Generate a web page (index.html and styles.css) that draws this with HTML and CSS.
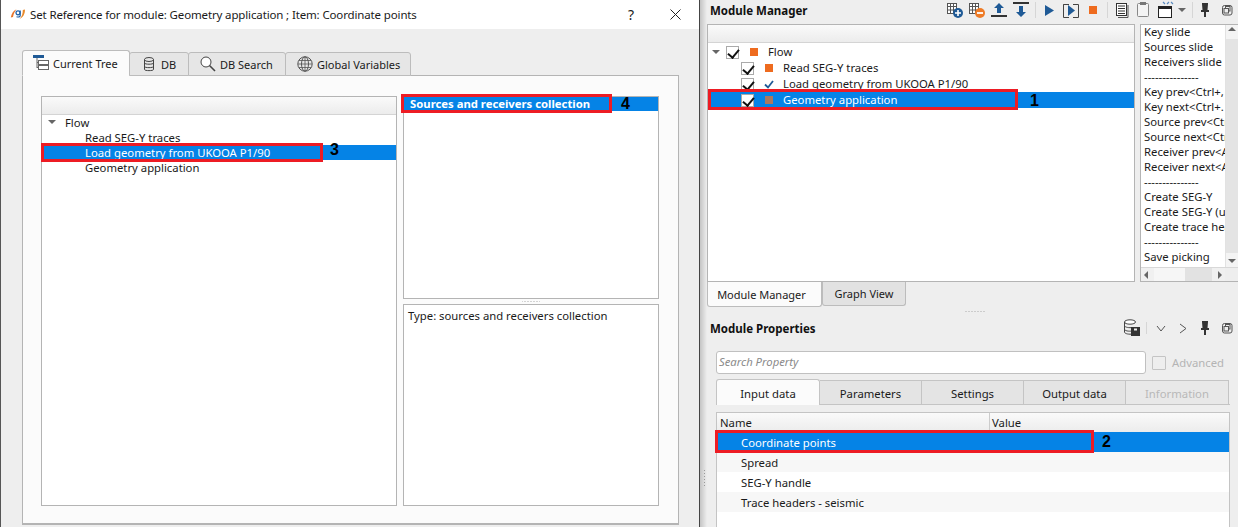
FILE: index.html
```html
<!DOCTYPE html>
<html lang="en">
<head>
<meta charset="utf-8">
<title>Set Reference</title>
<link rel="stylesheet" href="styles.css">
</head>
<body>
<div class="dialog">
  <div class="titlebar">
    <svg class="app-icon" width="16" height="12" viewBox="0 0 16 12"><path d="M.8 9.500C1.500 5.500 3.500 2.500 6.500 1.300C4.800 3.500 3.500 6 3 9Z" fill="#e8742a"/><path d="M15 1.500C15 6 13 9.500 9.500 11C12 8.500 12.800 5.500 12.800 2Z" fill="#e8892a"/><circle cx="8" cy="4.800" r="2" fill="none" stroke="#1d5fa8" stroke-width="1.200"/><path d="M10.200 2.500V7.500C10.200 9 8.500 9.300 6.500 8.700" fill="none" stroke="#1d5fa8" stroke-width="1.200"/></svg>
    <span class="title-text">Set Reference for module: Geometry application ; Item: Coordinate points</span>
    <span class="help">?</span>
    <svg class="close" width="11" height="11" viewBox="0 0 11 11"><path d="M.5.5L10.5 10.5M10.5.5L.5 10.5" stroke="#222" stroke-width="1" fill="none"/></svg>
  </div>
  <div class="dialog-body">
    <div class="tabbar">
      <div class="tab tab-active tab-tree">
        <svg width="16" height="16" viewBox="0 0 16 16"><rect x="0" y="0" width="11" height="3" fill="#1f5a96"/><path d="M4 3V13M4 7.500H6M4 12.500H6" stroke="#666" fill="none"/><rect x="5.500" y="5.500" width="10" height="4" fill="#fff" stroke="#666"/><rect x="5.500" y="10.500" width="10" height="4" fill="#fff" stroke="#666"/></svg>
        Current Tree
      </div>
      <div class="tab tab-db">
        <svg width="12" height="15" viewBox="0 0 12 15"><ellipse cx="6" cy="2.500" rx="4.500" ry="2" fill="none" stroke="#444"/><path d="M1.500 2.500V12.500C1.500 14 10.500 14 10.500 12.500V2.500M1.500 6C1.500 7.600 10.500 7.600 10.500 6M1.500 9.500C1.500 11 10.500 11 10.500 9.500" fill="none" stroke="#444"/></svg>
        DB
      </div>
      <div class="tab tab-search">
        <svg width="16" height="16" viewBox="0 0 16 16"><circle cx="6" cy="6" r="5" fill="#fff" stroke="#444"/><path d="M9.500 9.500L15 15" stroke="#444" stroke-width="1.600"/></svg>
        DB Search
      </div>
      <div class="tab tab-global">
        <svg width="16" height="16" viewBox="0 0 16 16"><circle cx="8" cy="8" r="7.200" fill="none" stroke="#555"/><ellipse cx="8" cy="8" rx="3.500" ry="7.200" fill="none" stroke="#555"/><path d="M8 1V15M1 8H15M2 4.500H14M2 11.500H14" stroke="#555" stroke-width=".8" fill="none"/></svg>
        Global Variables
      </div>
    </div>
    <div class="tabpane">
      <div class="box left-tree">
        <div class="header-strip"></div>
        <div class="row row-flow"><span class="tri"></span>Flow</div>
        <div class="row row-child">Read SEG-Y traces</div>
        <div class="row row-child row-sel">Load geometry from UKOOA P1/90</div>
        <div class="row row-child">Geometry application</div>
      </div>
      <div class="right-col">
        <div class="box collection">
          <div class="row-coll">Sources and receivers collection</div>
        </div>
        <div class="grip-h"></div>
        <div class="box type-box">Type: sources and receivers collection</div>
      </div>
    </div>
    <div class="mark mark-3"></div><div class="num num-3">3</div>
    <div class="mark mark-4"></div><div class="num num-4">4</div>
  </div>
</div>

<div class="dock">
  <div class="dock-title">
    <span class="dock-name">Module Manager</span>
    <div class="toolbar">
      <svg class="ti" viewBox="0 0 22 20"><g fill="none" stroke="#555"><rect x="3.500" y="3.500" width="9" height="10" fill="#fff"/><path d="M6.500 3.500V13.500M9.500 3.500V13.500M3.500 6.500H12.500M3.500 10H12.500"/></g><circle cx="14" cy="13" r="5" fill="#1f5a96"/><path d="M11 13H17M14 10V16" stroke="#fff" stroke-width="1.600"/></svg>
      <svg class="ti" viewBox="0 0 22 20"><g fill="none" stroke="#555"><rect x="3.500" y="3.500" width="9" height="10" fill="#fff"/><path d="M6.500 3.500V13.500M9.500 3.500V13.500M3.500 6.500H12.500M3.500 10H12.500"/></g><circle cx="14" cy="13" r="5" fill="#ee7b26"/><path d="M11 13H17" stroke="#fff" stroke-width="1.800"/></svg>
      <svg class="ti" viewBox="0 0 22 20"><path d="M11 3L16 8H13V13H9V8H6Z" fill="#1f5a96"/><rect x="3" y="15" width="16" height="2" fill="#333"/></svg>
      <svg class="ti" viewBox="0 0 22 20"><rect x="3" y="2" width="16" height="2" fill="#333"/><path d="M11 17L6 12H9V6H13V12H16Z" fill="#1f5a96"/></svg>
      <span class="tsep"></span>
      <svg class="ti" viewBox="0 0 22 20"><path d="M7 5L16 10.500L7 16Z" fill="#1f5a96"/></svg>
      <svg class="ti" viewBox="0 0 22 20"><path d="M3.500 5V4.500H9M3.500 4.500V17.500H9M13 4.500H18.500V17.500H13" fill="none" stroke="#444"/><path d="M8 5L15 10.500L8 16Z" fill="#1f5a96"/></svg>
      <svg class="ti" viewBox="0 0 22 20"><rect x="7" y="6" width="8" height="8" fill="#ee6b1f"/></svg>
      <span class="tsep"></span>
      <svg class="ti" viewBox="0 0 22 20"><rect x="6.500" y="3.500" width="10" height="12" fill="#fff" stroke="#333" stroke-width="1"/><path d="M8 6H15M8 8.500H15M8 11H15M8 13.500H15" stroke="#333"/><path d="M18 5V17.500H8" fill="none" stroke="#555"/></svg>
      <svg class="ti" viewBox="0 0 22 20"><rect x="5.500" y="3.500" width="11" height="13" rx="1" fill="#f4f4f4" stroke="#888"/><rect x="8" y="2" width="6" height="3" fill="#777"/></svg>
      <svg class="ti" viewBox="0 0 22 20"><rect x="4.500" y="6.500" width="13" height="11" fill="#fff" stroke="#222"/><rect x="4" y="6" width="14" height="3" fill="#222"/><path d="M9 2L11 4M13 4L15 2M17 2L19 4" stroke="#5b8bc0" stroke-width="1.200" fill="none"/></svg>
      <svg class="ta" viewBox="0 0 12 20"><path d="M2 8H10L6 12Z" fill="#666"/></svg>
      <span class="tsep tsep-wide"></span>
      <svg class="ti" viewBox="0 0 22 20"><path d="M8 3H14V4L13.500 10H15V12H12V17H10V12H7V10H8.500L8 4Z" fill="#333"/></svg>
      <svg class="ti" viewBox="0 0 22 20"><rect x="6.500" y="5.500" width="9.500" height="9.500" rx="2" fill="none" stroke="#555"/><rect x="9.500" y="6.500" width="4.500" height="4.500" fill="none" stroke="#555"/><rect x="8" y="8.500" width="4.500" height="4.500" fill="#eee" stroke="#555"/></svg>
    </div>
  </div>
  <div class="mm-area">
    <div class="box mm-tree">
      <div class="header-strip"></div>
      <div class="mm-row mm-flow"><span class="tri"></span><span class="chk"></span><span class="sq sq-orange"></span>Flow</div>
      <div class="mm-row mm-child"><span class="chk"></span><span class="sq sq-orange"></span>Read SEG-Y traces</div>
      <div class="mm-row mm-child"><span class="chk"></span><svg class="ok" width="10" height="9" viewBox="0 0 10 9"><path d="M1 4.500L4 7.500L9 1" fill="none" stroke="#1f5a96" stroke-width="1.800"/></svg>Load geometry from UKOOA P1/90</div>
      <div class="mm-row mm-child mm-sel"><span class="chk"></span><span class="sq sq-brown"></span>Geometry application</div>
    </div>
    <div class="side">
      <div class="side-main">
        <div class="side-list">
          <div class="sl">Key slide</div>
          <div class="sl">Sources slide</div>
          <div class="sl">Receivers slide</div>
          <div class="sl">---------------</div>
          <div class="sl">Key prev&lt;Ctrl+,</div>
          <div class="sl">Key next&lt;Ctrl+.</div>
          <div class="sl">Source prev&lt;Ctrl</div>
          <div class="sl">Source next&lt;Ctrl</div>
          <div class="sl">Receiver prev&lt;Alt</div>
          <div class="sl">Receiver next&lt;Alt</div>
          <div class="sl">---------------</div>
          <div class="sl">Create SEG-Y</div>
          <div class="sl">Create SEG-Y (u</div>
          <div class="sl">Create trace hea</div>
          <div class="sl">---------------</div>
          <div class="sl">Save picking</div>
        </div>
        <div class="vscroll"><span class="up"></span><span class="vspace"></span><span class="down"></span></div>
      </div>
      <div class="hscroll"><span class="left"></span><span class="hspace"><span class="hthumb"></span></span><span class="right"></span><span class="corner"></span></div>
    </div>
  </div>
  <div class="dock-tabs">
    <div class="dtab dtab-active">Module Manager</div>
    <div class="dtab dtab-off">Graph View</div>
  </div>
  <div class="grip-row"></div>
  <div class="props-title">
    <span class="dock-name">Module Properties</span>
    <div class="toolbar">
      <svg class="pi-db" viewBox="0 0 18 18"><ellipse cx="7" cy="3" rx="5.500" ry="2.200" fill="#fff" stroke="#444"/><path d="M1.500 3V13C1.500 15 7 15.500 9 15M1.500 6.500C1.500 8.500 7 9 9 8.500M1.500 10C1.500 12 6 12.500 9 12" fill="none" stroke="#444"/><rect x="8" y="8" width="9" height="9" fill="#333"/><rect x="11" y="9.500" width="3" height="2" fill="#eee"/></svg>
      <span class="tsep psep"></span>
      <svg class="pa" viewBox="0 0 22 18"><path d="M7 7L11 12L15 7" fill="none" stroke="#555"/></svg>
      <svg class="pa" viewBox="0 0 22 18"><path d="M8 5L14 9.500L8 14" fill="none" stroke="#555"/></svg>
      <svg class="pa" viewBox="0 0 22 18"><path d="M8 2H14V3L13.500 9H15V11H12V16H10V11H7V9H8.500L8 3Z" fill="#333"/></svg>
      <svg class="pa" viewBox="0 0 22 18"><rect x="6.500" y="4.500" width="9.500" height="9.500" rx="2" fill="none" stroke="#555"/><rect x="9.500" y="5.500" width="4.500" height="4.500" fill="none" stroke="#555"/><rect x="8" y="7.500" width="4.500" height="4.500" fill="#eee" stroke="#555"/></svg>
    </div>
  </div>
  <div class="search-row">
    <div class="search">Search Property</div>
    <span class="adv-box"></span>
    <span class="adv-label">Advanced</span>
  </div>
  <div class="ptabs">
    <div class="ptab ptab-active">Input data</div>
    <div class="ptab">Parameters</div>
    <div class="ptab">Settings</div>
    <div class="ptab">Output data</div>
    <div class="ptab ptab-off">Information</div>
  </div>
  <div class="ptable">
    <div class="phead"><span class="ph-name">Name</span><span class="ph-val">Value</span></div>
    <div class="prow prow-sel">Coordinate points</div>
    <div class="prow prow-alt">Spread</div>
    <div class="prow">SEG-Y handle</div>
    <div class="prow prow-alt">Trace headers - seismic</div>
  </div>
  <div class="side-grip"></div>
  <div class="mark mark-1"></div><div class="num num-1">1</div>
  <div class="mark mark-2"></div><div class="num num-2">2</div>
</div>
</body>
</html>
```

FILE: styles.css
```css
* { box-sizing: border-box; }
html, body { margin: 0; padding: 0; }
body {
  width: 1238px; height: 527px; overflow: hidden; display: flex;
  font-family: "Noto Sans", "Open Sans", sans-serif; font-size: 11.3px; color: #1a1a1a; background: #eee;
}
.dialog {
  width: 700px; height: 527px; flex: none; display: flex; flex-direction: column;
  border-left: 1px solid #555; border-right: 1px solid #444; background: #eee;
}
.titlebar { height: 29px; flex: none; background: #fff; display: flex; align-items: center; padding-bottom: 1px; }
.app-icon { margin-left: 9px; flex: none; }
.title-text { margin-left: 4px; font-size: 11.5px; letter-spacing: -0.14px; white-space: nowrap; }
.help { margin-left: auto; font-size: 14px; }
.close { margin: 0 18px 0 36px; }
.dialog-body { flex: 1; position: relative; padding: 21px 20px 1px 21px; display: flex; flex-direction: column; }
.tabbar { display: flex; align-items: flex-end; height: 26px; margin-bottom: -1px; position: relative; z-index: 1; }
.tab {
  height: 24px; display: flex; align-items: center; gap: 4px; padding-left: 11px; font-size: 11px;
  background: #e6e6e6; border: 1px solid #bcbcbc; border-radius: 3px 3px 0 0; margin-left: -1px; white-space: nowrap;
}
.tab-active { height: 26px; background: #fbfbfb; border-bottom-color: #fbfbfb; margin-left: 0; padding-left: 10px; }
.tab-tree { width: 108px; }
.tab-db { width: 60px; padding-left: 13px; gap: 6px; }
.tab-search { width: 98px; }
.tab-global { width: 126px; }
.tabpane {
  height: 450px; flex: none; background: #fbfbfb; border: 1px solid #b4b4b4; border-bottom-width: 2px;
  padding: 20px 19px 17px 18px; display: flex; gap: 6px;
}
.box { background: #fff; border: 1px solid #b4b4b4; }
.left-tree { width: 356px; flex: none; }
.header-strip { height: 18px; background: linear-gradient(#fafafa, #ececec); border-bottom: 1px solid #d4d4d4; }
.row { height: 15px; line-height: 15px; white-space: nowrap; position: relative; }
.row-flow { padding-left: 23px; }
.row-flow .tri { left: 6px; top: 5px; }
.row-child { padding-left: 43px; }
.row-sel { background: #0583e6; color: #fff; }
.tri { position: absolute; width: 0; height: 0; border: 4px solid transparent; border-top: 4px solid #666; border-bottom: 0; }
.right-col { flex: 1; display: flex; flex-direction: column; min-width: 0; }
.collection { height: 203px; flex: none; }
.row-coll { height: 14px; line-height: 14px; background: #0583e6; color: #fff; font-weight: 700; padding-left: 6px; white-space: nowrap; }
.grip-h { height: 5px; flex: none; background: radial-gradient(circle, #aaa 0.6px, transparent 1px) center / 3px 3px repeat-x; margin: 0 119px; }
.type-box { flex: 1; padding: 3px 4px; }

.mark { position: absolute; border: 3px solid #ed1c24; pointer-events: none; z-index: 3; }
.num { position: absolute; font-weight: 700; font-size: 16px; line-height: 18px; color: #000; z-index: 3; font-family: "Liberation Sans", sans-serif; }
.mark-3 { left: 40px; top: 114px; width: 282px; height: 19px; }
.num-3 { left: 329px; top: 112px; }
.mark-4 { left: 400px; top: 65px; width: 211px; height: 19px; }
.num-4 { left: 620px; top: 66px; }

.dock { width: 538px; height: 527px; flex: none; position: relative; background: linear-gradient(90deg, #c4c4c4, #eee 7px); padding-left: 7px; display: flex; flex-direction: column; }
.dock-title { height: 24px; flex: none; display: flex; align-items: center; padding-bottom: 4px; }
.dock-name { font-weight: 700; font-size: 11.5px; margin-left: 3px; color: #111; white-space: nowrap; }
.toolbar { margin-left: auto; display: flex; align-items: center; }
.ti { width: 22px; height: 20px; flex: none; display: block; }
.ta { width: 12px; height: 20px; flex: none; display: block; }
.tsep { width: 1px; height: 16px; background: #d6d6d6; margin: 0 2px 0 3px; flex: none; }
.tsep-wide { margin-left: 4px; margin-right: 1px; }
.mm-area { height: 258px; flex: none; display: flex; gap: 5px; }
.mm-tree { width: 428px; flex: none; }
.mm-row { height: 16px; line-height: 16px; position: relative; white-space: nowrap; display: flex; align-items: center; }
.mm-flow { padding-left: 18px; margin-top: 1px; }
.mm-flow .tri { left: 4px; top: 6px; }
.mm-child { padding-left: 33px; }
.mm-sel { background: #0583e6; color: #fff; }
.chk {
  width: 13px; height: 13px; flex: none; border: 1px solid #aaa; background: #fff; position: relative; margin-right: 11px;
}
.chk::after {
  content: ""; position: absolute; left: 3px; top: 0; width: 5px; height: 9px;
  border: solid #111; border-width: 0 2px 2px 0; transform: rotate(40deg);
}
.sq { width: 8px; height: 8px; flex: none; margin-right: 10px; }
.sq-orange { background: #ee6b1f; }
.sq-brown { background: #ab7760; }
.ok { flex: none; margin-right: 9px; margin-left: -1px; }
.side { width: 98px; flex: none; display: flex; flex-direction: column; border: 1px solid #b4b4b4; border-right: 0; background: #fff; overflow: hidden; }
.side-main { flex: 1; display: flex; min-height: 0; }
.side-list { flex: 1; overflow: hidden; margin-top: -1px; padding: 0 0 0 3px; min-width: 0; }
.sl { height: 15px; line-height: 15px; white-space: nowrap; color: #1a1a1a; }
.vscroll { width: 13px; flex: none; background: #f0f0f0; display: flex; flex-direction: column; border-left: 1px solid #e2e2e2; }
.vspace { flex: 1; background: #e4e4e4; }
.up, .down { height: 14px; flex: none; position: relative; background: #f4f4f4; }
.up::after, .down::after, .left::after, .right::after { content: ""; position: absolute; width: 0; height: 0; border: 4px solid transparent; }
.up::after { left: 2px; top: 2px; border-bottom-color: #666; border-top: 0; }
.down::after { left: 2px; top: 6px; border-top-color: #666; border-bottom: 0; }
.hscroll { height: 14px; flex: none; background: #f0f0f0; display: flex; border-top: 1px solid #d8d8d8; }
.left, .right { width: 13px; flex: none; position: relative; }
.left::after { left: 3px; top: 3px; border-right-color: #666; border-left: 0; }
.right::after { left: 6px; top: 3px; border-left-color: #666; border-right: 0; }
.hspace { flex: 1; display: flex; justify-content: flex-end; background: #f6f6f6; }
.hthumb { width: 27px; background: #e2e2e2; }
.corner { width: 13px; flex: none; background: #eee; }
.dock-tabs { height: 25px; flex: none; display: flex; align-items: flex-start; }
.dtab { text-align: center; border: 1px solid #bcbcbc; border-top: 0; white-space: nowrap; font-size: 11px; }
.dtab-active { width: 115px; height: 25px; line-height: 26px; background: #fbfbfb; border-radius: 0 0 3px 3px; padding-right: 6px; }
.dtab-off { width: 84px; height: 24px; line-height: 24px; background: #e2e2e2; border-radius: 0 0 3px 3px; }
.grip-row { height: 8px; flex: none; background: radial-gradient(circle, #aaa 0.6px, transparent 1px) center / 3px 3px repeat-x; margin: 0 253px 0 258px; }
.props-title { height: 22px; flex: none; display: flex; align-items: center; margin-top: 2px; }
.pi-db { width: 18px; height: 18px; flex: none; }
.psep { height: 12px; margin: 0 3px 0 5px; }
.pa { width: 22px; height: 18px; flex: none; display: block; }
.search-row { display: flex; align-items: center; height: 23px; flex: none; margin: 12px 0 0 9px; }
.search {
  width: 430px; height: 23px; line-height: 20px; border: 1px solid #c0c0c0; border-radius: 3px; background: #fff;
  color: #8a8a8a; font-style: italic; padding-left: 2px;
}
.adv-box { width: 14px; height: 14px; border: 1px solid #c4c4c4; border-radius: 1px; margin-left: 6px; background: #eee; flex: none; }
.adv-label { color: #b4b4b4; margin-left: 6px; }
.ptabs { display: flex; height: 26px; flex: none; margin: 5px 0 0 9px; align-items: flex-end; border-bottom: 1px solid #c4c4c4; width: 514px; }
.ptab { width: 102px; height: 24px; line-height: 25px; text-align: center; background: #e4e4e4; border: 1px solid #c4c4c4; border-bottom: 0; border-left: 0; }
.ptab-active { width: 104px; height: 26px; line-height: 27px; background: #fbfbfb; border-left: 1px solid #c4c4c4; border-radius: 3px 3px 0 0; margin-bottom: -1px; }
.ptab-off { color: #b8b8b8; background: #e8e8e8; width: 103px; }
.ptable { flex: 1; margin: 7px 8px 0 9px; background: #fff; border: 1px solid #c4c4c4; border-bottom: 0; }
.phead { height: 19px; display: flex; line-height: 20px; background: linear-gradient(#fafafa, #ececec); }
.ph-name { width: 273px; padding-left: 3px; border-right: 1px solid #ccc; }
.ph-val { padding-left: 2px; }
.prow { height: 20px; line-height: 20px; padding: 1px 0 0 24px; white-space: nowrap; }
.prow-sel { background: #0583e6; color: #fff; }
.prow-alt { background: #f7f7f7; }
.side-grip { position: absolute; left: 4px; top: 470px; width: 1px; height: 16px; background: repeating-linear-gradient(#999 0 1px, transparent 1px 3px); }
.mark-1 { left: 8px; top: 89px; width: 310px; height: 21px; }
.num-1 { left: 330px; top: 92px; }
.mark-2 { left: 15px; top: 430px; width: 379px; height: 23px; }
.num-2 { left: 402px; top: 433px; }
```
